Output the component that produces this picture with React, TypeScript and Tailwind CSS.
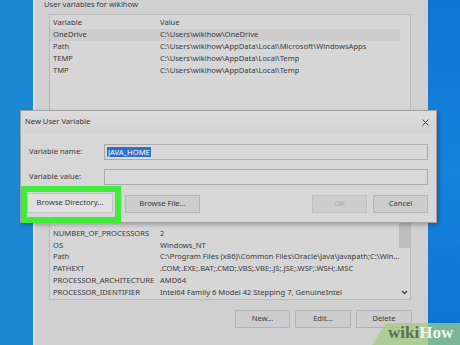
import React from "react";

const font = { fontFamily: '"Noto Sans", "Open Sans", sans-serif' };

function Row({ name, value, hl }: { name: string; value: string; hl?: boolean }) {
  return (
    <div className={`flex h-[12px] items-center whitespace-nowrap ${hl ? "bg-[#cdcdcd]" : ""}`}>
      <div className="w-[110px] shrink-0 pl-[3px]">{name}</div>
      <div className="overflow-hidden">{value}</div>
    </div>
  );
}

function SRow({ name, value }: { name: string; value: string }) {
  return (
    <div className="flex h-[11.8px] items-center whitespace-nowrap">
      <div className="w-[110px] shrink-0 pl-[3px]">{name}</div>
      <div className="overflow-hidden">{value}</div>
    </div>
  );
}

function Btn({ children, cls = "" }: { children: React.ReactNode; cls?: string }) {
  return (
    <div className={`flex h-[18px] items-center justify-center border border-[#b4b4b4] bg-[#cdcdcd] ${cls}`}>
      {children}
    </div>
  );
}

export default function App() {
  return (
    <div className="relative h-[345px] w-[460px] overflow-hidden text-[7.6px] text-[#3a3a3a]" style={font}>
      <div className="flex h-full w-full">
        <div className="w-[33px] shrink-0 bg-[#1a88d2]" />
        {/* back window */}
        <div className="flex w-[395px] shrink-0 flex-col border-l-2 border-[#e2e2e2] bg-[#d0d0d0]">
          <div className="h-[8px] pl-[9px] leading-[8px]">User variables for wikihow</div>
          <div className="ml-[14px] mr-[17px] mt-[6px] h-[98px] border border-[#b9b9b9] bg-[#d6d6d6] pt-[2px]">
            <Row name="Variable" value="Value" />
            <div className="pr-[10px]">
              <Row name="OneDrive" value="C:\Users\wikihow\OneDrive" hl />
            </div>
            <Row name="Path" value="C:\Users\wikihow\AppData\Local\Microsoft\WindowsApps" />
            <Row name="TEMP" value="C:\Users\wikihow\AppData\Local\Temp" />
            <Row name="TMP" value="C:\Users\wikihow\AppData\Local\Temp" />
          </div>
          <div className="ml-[14px] mr-[17px] mt-[91px] flex h-[97px] border border-[#b9b9b9] bg-[#d6d6d6]">
            <div className="min-w-0 flex-1 overflow-hidden">
              <div className="h-[23.6px]" />
              <SRow name="NUMBER_OF_PROCESSORS" value="2" />
              <SRow name="OS" value="Windows_NT" />
              <SRow name="Path" value="C:\Program Files (x86)\Common Files\Oracle\Java\javapath;C:\Win..." />
              <SRow name="PATHEXT" value=".COM;.EXE;.BAT;.CMD;.VBS;.VBE;.JS;.JSE;.WSF;.WSH;.MSC" />
              <SRow name="PROCESSOR_ARCHITECTURE" value="AMD64" />
              <SRow name="PROCESSOR_IDENTIFIER" value="Intel64 Family 6 Model 42 Stepping 7, GenuineIntel" />
            </div>
            <div className="flex w-[11px] shrink-0 flex-col items-center">
              <div className="mt-[12px] h-[32px] w-[11px] bg-[#bdbdbd]" />
              <div className="flex-1" />
              <svg width="7" height="5" viewBox="0 0 7 5" className="mb-[4px]">
                <path d="M1 1 L3.5 3.5 L6 1" stroke="#444" strokeWidth="1.3" fill="none" />
              </svg>
            </div>
          </div>
          <div className="mr-[16px] mt-[10px] flex justify-end gap-[5px]">
            <Btn cls="w-[55px]">New...</Btn>
            <Btn cls="w-[56px]">Edit...</Btn>
            <Btn cls="w-[56px]">Delete</Btn>
          </div>
        </div>
        <div className="flex-1 bg-gradient-to-b from-[#0c76d4] via-[#1583dc] to-[#0a74d2]" />
      </div>

      {/* dialog */}
      <div className="absolute left-[20px] top-[110px] flex h-[113px] w-[417px] flex-col border border-[#a2a2a2] bg-[#d7d7d7] shadow-[2px_2px_4px_rgba(0,0,0,0.25)]">
        <div className="flex h-[22px] items-center justify-between bg-gradient-to-b from-[#dcdcdc] to-[#d3d3d3] pl-[4px] pr-[7px]">
          <span className="text-[#333]">New User Variable</span>
          <svg width="7" height="7" viewBox="0 0 7 7">
            <path d="M0.5 0.5 L6.5 6.5 M6.5 0.5 L0.5 6.5" stroke="#444" strokeWidth="1" />
          </svg>
        </div>
        <div className="mt-[11px] flex h-[16px] items-center">
          <div className="w-[83px] pl-[8px]">Variable name:</div>
          <div className="flex h-[16px] w-[324px] items-center border border-[#aaaaaa] bg-[#d9d9d9] pl-[2px]">
            <span className="bg-[#2f6fc6] px-[1px] leading-[10px] text-white">JAVA_HOME</span>
          </div>
        </div>
        <div className="mt-[9px] flex h-[16px] items-center">
          <div className="w-[83px] pl-[8px]">Variable value:</div>
          <div className="h-[16px] w-[324px] border border-[#aaaaaa] bg-[#d9d9d9]" />
        </div>
        <div className="mt-[8px] flex items-end">
          <div className="ml-[6px] flex h-[20px] w-[86px] items-center justify-center border border-[#c4c4c4] bg-[#e0e0e0]">
            Browse Directory...
          </div>
          <Btn cls="ml-[12px] w-[75px]">Browse File...</Btn>
          <div className="flex-1" />
          <Btn cls="w-[55px] text-[#a6a6a6] bg-[#c8c8c8] border-[#c0c0c0]">OK</Btn>
          <Btn cls="ml-[6px] mr-[8px] w-[55px]">Cancel</Btn>
        </div>
      </div>

      {/* green highlight */}
      <div className="absolute left-[21px] top-[186px] h-[37px] w-[100px] border-[6px] border-[#3fec3c]" />

      {/* wikiHow watermark */}
      <div className="absolute bottom-0 right-0 h-[22px] w-[88px]">
        <svg width="88" height="22" viewBox="0 0 88 22" className="absolute inset-0">
          <polygon points="14,0 88,0 88,22 0,22" fill="rgba(160,205,130,0.75)" />
        </svg>
        <div
          className="absolute left-[16px] top-[1px] text-[17px] font-bold leading-[18px]"
          style={{ fontFamily: '"Liberation Serif", serif' }}
        >
          <span className="text-[#5d6e55]">wiki</span>
          <span className="text-[#f2f6ee]">How</span>
        </div>
      </div>
    </div>
  );
}
